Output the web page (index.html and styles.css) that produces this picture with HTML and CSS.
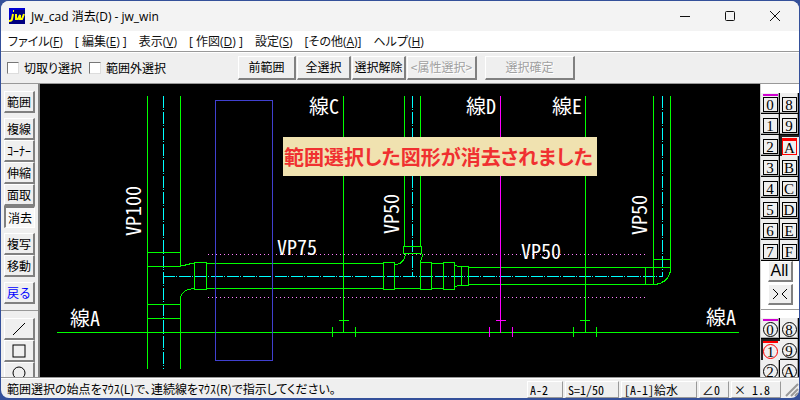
FILE: index.html
```html
<!DOCTYPE html>
<html lang="ja">

<head>
    <meta charset="UTF-8">
    <meta name="viewport" content="width=device-width, initial-scale=1.0">
    <title>Jw_cad 消去(D) - jw_win</title>
    <link rel="stylesheet" href="styles.css">
</head>

<body>
    <div class="window">

        <header class="titlebar">
            <svg class="logo" width="16" height="16" viewBox="0 0 16 16" aria-hidden="true">
                <rect width="16" height="16" fill="#000080"/>
                <path d="M0 0h16v2H6l-6 9z" fill="#0000d0"/>
                <path d="M4 3h1M4 6l-1 5q0 2-3 2M7 6v5h2l2-4v4h2l2-5" fill="none" stroke="#ffff00" stroke-width="2"/>
            </svg>
            <h1>Jw_cad 消去(D) - jw_win</h1>
            <div class="window-buttons">
                <button type="button" aria-label="最小化"><svg width="12" height="12"><path d="M1 6.500h10"/></svg></button>
                <button type="button" aria-label="最大化"><svg width="12" height="12"><rect x="1.500" y="1.500" width="9" height="9" rx="1"/></svg></button>
                <button type="button" aria-label="閉じる"><svg width="12" height="12"><path d="M1 1l10 10M11 1L1 11"/></svg></button>
            </div>
        </header>

        <nav class="menu">
            <a href="#">ファイル(<u>F</u>)</a>
            <a href="#">[ 編集(<u>E</u>) ]</a>
            <a href="#">表示(<u>V</u>)</a>
            <a href="#">[ 作図(<u>D</u>) ]</a>
            <a href="#">設定(<u>S</u>)</a>
            <a href="#">[その他(<u>A</u>)]</a>
            <a href="#">ヘルプ(<u>H</u>)</a>
        </nav>

        <div class="toolbar">
            <div class="checks">
                <label><input type="checkbox">切取り選択</label>
                <label><input type="checkbox">範囲外選択</label>
            </div>
            <div class="commands">
                <button type="button" class="btn w58">前範囲</button>
                <button type="button" class="btn w54">全選択</button>
                <button type="button" class="btn w54">選択解除</button>
                <button type="button" class="btn w70" disabled>&lt;属性選択&gt;</button>
                <button type="button" class="btn w90" disabled>選択確定</button>
            </div>
        </div>

        <main>
            <aside class="tools">
                <div class="tool-group">
                    <button type="button" class="btn">範囲</button>
                </div>
                <div class="tool-group">
                    <button type="button" class="btn">複線</button>
                    <button type="button" class="btn">ｺｰﾅｰ</button>
                    <button type="button" class="btn">伸縮</button>
                    <button type="button" class="btn">面取</button>
                    <button type="button" class="btn pressed">消去</button>
                </div>
                <div class="tool-group">
                    <button type="button" class="btn">複写</button>
                    <button type="button" class="btn">移動</button>
                </div>
                <div class="tool-group">
                    <button type="button" class="btn undo">戻る</button>
                </div>
                <div class="tool-group shapes">
                    <button type="button" class="btn" aria-label="線"><svg width="14" height="14"><path d="M1 13L13 1"/></svg></button>
                    <button type="button" class="btn" aria-label="矩形"><svg width="14" height="14"><rect x="1" y="1" width="12" height="12"/></svg></button>
                    <button type="button" class="btn" aria-label="円"><svg width="14" height="14"><circle cx="7" cy="7" r="6"/></svg></button>
                </div>
            </aside>

            <section class="canvas">
                <svg class="drawing" width="100%" height="100%">
                    <g transform="translate(-40 -84)">
                        <!-- dimension guides -->
                        <path class="guide" d="M208 254.500H645M208 297.500H647"/>

                        <!-- center lines -->
                        <path class="center" d="M163.500 96V369M163 276.500H662M412.500 96V277M662.500 96V277"/>

                        <!-- VP100 -->
                        <path class="pipe" d="M147.500 96V369M180.500 96V266M180.500 297V369M147 252.500H181M147 266.500H181M147 304.500H181M147 318.500H181"/>
                        <path class="pipe" d="M180.500 265.500H183L188 264.500L191 263.500H194M180.500 297.500Q183 289 194 288.500"/>

                        <!-- VP75 -->
                        <path class="pipe" d="M194.500 262.500h12v27h-12zM206 263.500H383M206 288.500H383M383.500 262.500h11v27h-11zM394 288.500H420"/>
                        <path class="pipe" d="M420.500 262.500h11v27h-11zM431 263.500H443M431 288.500H443M443.500 262.500h11v27h-11z"/>
                        <path class="pipe" d="M404.500 96V246M420.500 96V246M403.500 246.500h18v7h-18z"/>
                        <path class="pipe" d="M394 264.500H397Q404 263 405.500 254M422.500 254Q422 258 420.500 262"/>

                        <!-- VP50 -->
                        <path class="pipe" d="M454 264.500L458 266.500H461M454 287.500L458 285.500H461M461.500 266.500h7v19h-7zM468 267.500H671M468 284.500H655"/>
                        <path class="pipe" d="M645.500 267V285M653.500 96V285M670.500 96V271M653 259.500H671M670.500 271Q668 283 655 284.500"/>

                        <!-- 線A, 線C, 線E -->
                        <path class="pipe" d="M57 332.500H739"/>
                        <path class="pipe" d="M343.500 96V332M339 320.500H349M332.500 327V337M355.500 327V337"/>
                        <path class="pipe" d="M585.500 96V332M580 320.500H590M573.500 327V337M596.500 327V337"/>
                        <!-- 線D -->
                        <path class="selected" d="M500.500 96V333M496 320.500H506M489.500 327V337M512.500 327V337"/>

                        <rect class="range" x="215.500" y="100.500" width="57" height="260"/>

                        <g class="labels">
                            <text x="309" y="114">線C</text>
                            <text x="466" y="114">線D</text>
                            <text x="552" y="114">線E</text>
                            <text x="70" y="326">線A</text>
                            <text x="706" y="325">線A</text>
                            <text x="277" y="255">VP75</text>
                            <text x="521" y="259">VP50</text>
                            <text transform="translate(141 236) rotate(-90)">VP100</text>
                            <text transform="translate(399 234) rotate(-90)">VP50</text>
                            <text transform="translate(647 235) rotate(-90)">VP50</text>
                        </g>
                    </g>
                </svg>
                <p class="message">範囲選択した図形が消去されました</p>
            </section>

            <aside class="layers">
                <div class="layer-grid">
                    <button type="button" class="used"><span>0</span></button>
                    <button type="button"><span>8</span></button>
                    <button type="button"><span>1</span></button>
                    <button type="button"><span>9</span></button>
                    <button type="button"><span>2</span></button>
                    <button type="button" class="current"><span>A</span></button>
                    <button type="button"><span>3</span></button>
                    <button type="button"><span>B</span></button>
                    <button type="button"><span>4</span></button>
                    <button type="button"><span>C</span></button>
                    <button type="button"><span>5</span></button>
                    <button type="button"><span>D</span></button>
                    <button type="button"><span>6</span></button>
                    <button type="button"><span>E</span></button>
                    <button type="button"><span>7</span></button>
                    <button type="button"><span>F</span></button>
                </div>
                <div class="layer-commands">
                    <button type="button" class="btn all">All</button>
                    <button type="button" class="btn" aria-label="切替"><svg width="16" height="12"><path d="M1 1L6 6L1 11M15 1L10 6L15 11"/></svg></button>
                </div>
                <div class="layer-grid groups">
                    <button type="button" class="used"><span>0</span></button>
                    <button type="button"><span>8</span></button>
                    <button type="button" class="current"><span>1</span></button>
                    <button type="button"><span>9</span></button>
                    <button type="button"><span>2</span></button>
                    <button type="button"><span>A</span></button>
                </div>
            </aside>
        </main>

        <footer class="status">
            <p>範囲選択の始点をﾏｳｽ(L)で、連続線をﾏｳｽ(R)で指示してください。</p>
            <button type="button" class="w36">A-2</button>
            <button type="button" class="w54">S=1/50</button>
            <button type="button" class="w76">[A-1]給水</button>
            <button type="button" class="w30">∠0</button>
            <button type="button" class="w50">× 1.8</button>
            <svg class="grip" width="16" height="16" aria-hidden="true"><path d="M3 15L15 3M8 15L15 8M12 15L15 12"/></svg>
        </footer>

    </div>
</body>

</html>
```
FILE: styles.css
```css
* {
    box-sizing: border-box;
}

body {
    margin: 0;
    height: 100vh;
    padding: 1px 1px 2px;
    background-color: #34509a;
    font-family: "Noto Sans CJK JP", sans-serif;
    font-size: 12px;
    color: #000;
}

button {
    margin: 0;
    padding: 0;
    font: inherit;
    color: inherit;
}

.window {
    display: flex;
    flex-direction: column;
    height: 100%;
    overflow: hidden;
    border-radius: 8px;
    background-color: #efefef;
}

/* title bar */
.titlebar {
    display: flex;
    align-items: center;
    height: 30px;
    flex-shrink: 0;
    padding: 0 2px 0 8px;
    gap: 6px;
    background-color: #f3f3f3;
}

h1 {
    margin: 0;
    flex: 1;
    font-family: "Open Sans", "Noto Sans CJK JP", sans-serif;
    font-size: 12px;
    font-weight: normal;
}

.window-buttons {
    display: flex;
}

.window-buttons button {
    width: 45px;
    height: 28px;
    display: flex;
    align-items: center;
    justify-content: center;
    border: 0;
    background: none;
}

.window-buttons svg {
    fill: none;
    stroke: #111;
}

/* menu */
.menu {
    display: flex;
    align-items: center;
    gap: 12px;
    height: 20px;
    flex-shrink: 0;
    padding-left: 7px;
    background-color: #fff;
    font-family: "Open Sans", "Noto Sans CJK JP", sans-serif;
    font-feature-settings: "palt";
}

.menu a {
    color: #111;
    text-decoration: none;
    white-space: nowrap;
}

/* toolbar */
.toolbar {
    display: flex;
    align-items: center;
    height: 33px;
    flex-shrink: 0;
    border-top: 1px solid #999;
    border-bottom: 1px solid #999;
    box-shadow: inset 0 1px #fff;
    padding: 0 6px;
    gap: 72px;
}

.checks {
    display: flex;
    gap: 7px;
    font-feature-settings: "palt";
}

.checks label {
    display: flex;
    align-items: center;
    gap: 5px;
    white-space: nowrap;
}

.checks input {
    appearance: none;
    width: 12px;
    height: 12px;
    margin: 0;
    background-color: #fff;
    border: 1px solid #777;
    border-right-color: #ddd;
    border-bottom-color: #ddd;
}

.commands {
    display: flex;
    gap: 1px;
}

.btn {
    display: flex;
    align-items: center;
    justify-content: center;
    height: 22px;
    border: 1px solid #fff;
    border-right: 2px solid #808080;
    border-bottom: 2px solid #808080;
    background-color: #efefef;
    line-height: 16px;
    white-space: nowrap;
}

.commands .btn {
    height: 24px;
}

.btn:disabled {
    color: #a0a0a0;
    text-shadow: 1px 1px #fff;
}

.commands .btn:last-child {
    margin-left: 7px;
}

.w30 { width: 30px; }
.w36 { width: 36px; }
.w50 { width: 50px; }
.w54 { width: 54px; }
.w58 { width: 58px; }
.w70 { width: 70px; }
.w76 { width: 76px; }
.w90 { width: 90px; }

/* work area */
main {
    display: flex;
    flex: 1;
    min-height: 0;
}

.tools {
    width: 39px;
    overflow: hidden;
    padding-top: 7px;
    border-right: 2px solid #808080;
}

.tool-group {
    margin: 0 4px 5px 3px;
}

.tool-group .btn {
    width: 31px;
}

.tool-group .pressed {
    border: 1px solid #fff;
    border-top: 2px solid #808080;
    border-left: 2px solid #808080;
    background-color: #f8f8f8;
}

.tool-group .undo {
    color: #00f;
}

.shapes {
    margin: 6px 0 0;
    padding: 7px 4px 0 3px;
    border-top: 1px solid #999;
}

.shapes svg,
.layer-commands svg {
    fill: none;
    stroke: #000;
}

.canvas {
    position: relative;
    flex: 1;
    min-width: 0;
    background-color: #000;
}

.drawing {
    display: block;
    fill: none;
}

.pipe,
.selected,
.center,
.guide,
.range {
    stroke: #0f0;
    shape-rendering: crispEdges;
}

.selected {
    stroke: #f0f;
}

.center {
    stroke: #0ff;
    stroke-dasharray: 12 1 1 2;
}

.guide {
    stroke: #ff80ff;
    stroke-dasharray: 1 3;
}

.range {
    stroke: #4040d0;
}

.labels {
    fill: #fff;
    font-size: 20px;
    font-feature-settings: "hwid";
}

/* notice over the drawing */
.message {
    position: absolute;
    left: 243px;
    top: 53px;
    margin: 0;
    padding: 0 4px 0 1px;
    background-color: #f0e2b0;
    color: #f03030;
    font-size: 20px;
    font-weight: bold;
    line-height: 39px;
    font-feature-settings: "palt";
    white-space: nowrap;
}

/* layer bar */
.layers {
    width: 39px;
    overflow: hidden;
    padding-top: 9px;
    border-left: 1px solid #ccc;
    background-color: #fff;
}

.layer-grid {
    display: grid;
    grid-template-columns: 19px 19px;
    grid-auto-rows: 21px;
    font-family: "Liberation Serif", serif;
    font-size: 15px;
}

.layer-grid button {
    display: flex;
    align-items: flex-end;
    justify-content: center;
    padding-bottom: 1px;
    border: 0;
    border-right: 1px solid #000;
    border-bottom: 1px solid #000;
    background-color: #efefef;
    box-shadow: inset -1px -1px #aaa;
}

.layer-grid span {
    width: 15px;
    height: 15px;
    border: 1px solid #000;
    line-height: 14px;
    text-align: center;
}

.layer-grid .used {
    background-image: linear-gradient(#d000d0, #d000d0);
    background-size: 15px 2px;
    background-position: 2px 1px;
    background-repeat: no-repeat;
}

.layer-grid .current {
    border: 0;
    box-shadow: inset 2px 2px #222;
}

.layer-grid .current span {
    height: 17px;
    border-color: #f00;
    border-top-width: 3px;
}

.groups {
    margin-top: 4px;
    padding-top: 8px;
    border-top: 1px solid #999;
}

.groups span {
    border-radius: 8px;
}

.groups .current {
    background-image: linear-gradient(#f00, #f00);
    background-size: 15px 2px;
    background-position: 2px 2px;
    background-repeat: no-repeat;
}

.groups .current span {
    height: 15px;
    border-top-width: 1px;
}

.layer-commands {
    display: flex;
    flex-direction: column;
    align-items: center;
    gap: 2px;
}

.layer-commands .btn {
    width: 25px;
    height: 21px;
}

.layer-commands .all {
    font-family: "Liberation Sans", sans-serif;
    font-size: 16px;
}

/* status bar */
.status {
    display: flex;
    align-items: center;
    height: 21px;
    flex-shrink: 0;
    gap: 2px;
    padding-top: 2px;
    border-top: 1px solid #999;
    box-shadow: inset 0 1px #fff;
    font-feature-settings: "hwid";
}

.status p {
    flex: 1;
    margin: 0;
    padding-left: 6px;
    font-feature-settings: "palt";
    line-height: 16px;
    white-space: nowrap;
}

.status button {
    height: 17px;
    padding-left: 2px;
    border: 1px solid #fff;
    border-right-color: #999;
    border-bottom-color: #999;
    background: none;
    line-height: 15px;
    text-align: left;
    white-space: pre;
}

.grip {
    fill: none;
    stroke: #999;
    stroke-width: 2px;
}
```
